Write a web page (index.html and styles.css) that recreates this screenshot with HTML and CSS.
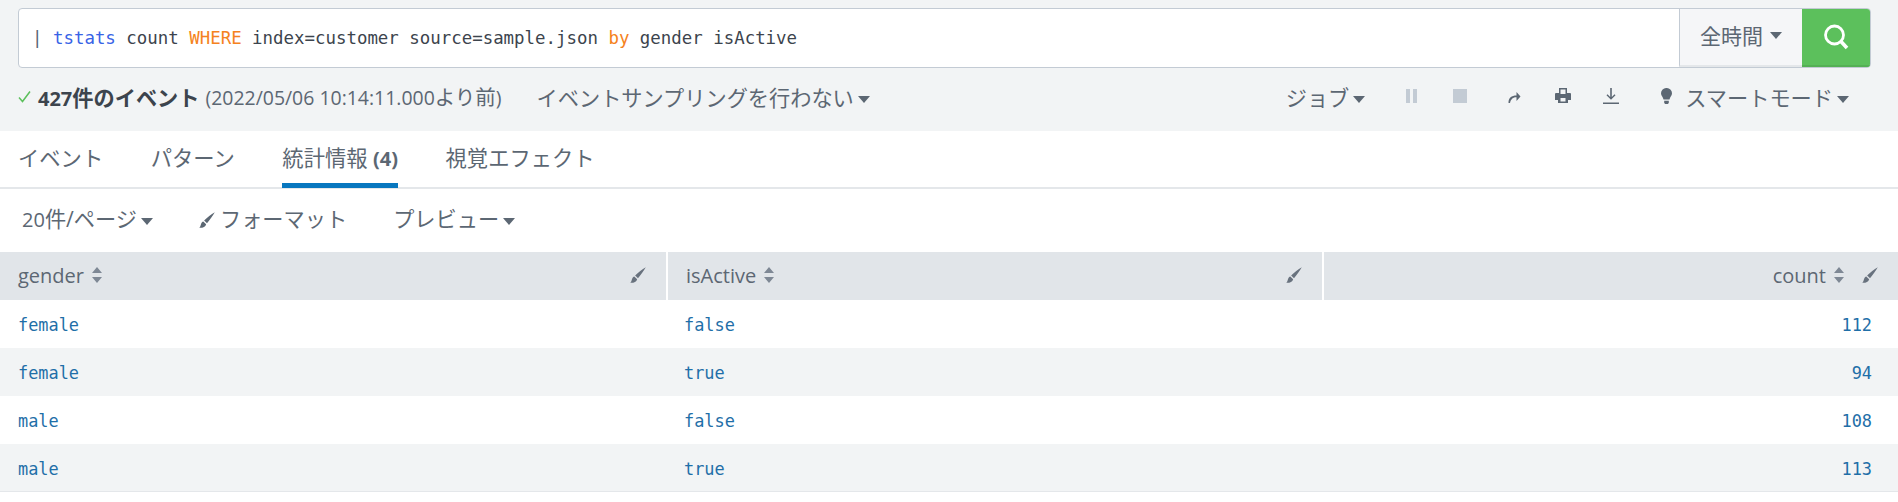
FILE: index.html
```html
<!DOCTYPE html>
<html lang="ja">
<head>
<meta charset="utf-8">
<title>Search</title>
<link rel="stylesheet" href="styles.css">
</head>
<body>
<header class="top">
  <div class="search">
    <div class="query"><span class="q-line"><span class="q-pipe">|</span> <span class="q-cmd">tstats</span> count <span class="q-kw">WHERE</span> index=customer source=sample.json <span class="q-kw">by</span> gender isActive</span></div>
    <div class="time">全時間<i class="caret"></i></div>
    <div class="go">
      <svg width="28" height="28" viewBox="0 0 28 28"><circle cx="12.5" cy="12" r="9" fill="none" stroke="#fff" stroke-width="2.8"/><path d="M19 18.500l6 6.500" stroke="#fff" stroke-width="3.600" fill="none"/></svg>
    </div>
  </div>
  <div class="status">
    <div class="status-left">
      <svg class="check" width="13" height="13" viewBox="0 0 13 13"><path d="M1 7.500l3.500 4L12 1.500" fill="none" stroke="#5cc05c" stroke-width="1.500"/></svg>
      <b class="count"><span class="lat">427</span>件のイベント</b>
      <span class="range">(2022/05/06 10:14:11.000<span class="jp">より前</span>)</span>
      <span class="sampling">イベントサンプリングを行わない<i class="caret"></i></span>
    </div>
    <div class="status-right">
      <span class="job">ジョブ<i class="caret"></i></span>
      <span class="actions">
        <svg width="11" height="16" viewBox="0 0 11 16"><path d="M0 1h4v14H0zM7 1h4v14H7z" fill="#c3cbd4"/></svg>
        <svg width="14" height="16" viewBox="0 0 14 16"><path d="M0 1h14v14H0z" fill="#c3cbd4"/></svg>
        <svg class="act-share" width="14" height="16" viewBox="0 0 14 16"><path d="M1.500 15c0-5.500 3-7.500 8-7.500V4l4 4.500-4 4.500V9.300c-3.500 0-5.500 1.700-6.500 5.700z" fill="#5c6773"/></svg>
        <svg class="act-print" width="16" height="16" viewBox="0 0 16 16"><path d="M4 0h8v5h3a1 1 0 0 1 1 1v6h-3v3H3v-3H0V6a1 1 0 0 1 1-1h3zM5.500 10v3.500h5V10zM5.500 1.500V6h5V1.500z" fill="#5c6773" fill-rule="evenodd"/></svg>
        <svg class="act-down" width="16" height="17" viewBox="0 0 16 17"><path d="M7.200 0h1.600v9l2.700-2.700 1 1L8 11.800 3.500 7.300l1-1L7.200 9zM0 14.500h16V16H0z" fill="#5c6773"/></svg>
      </span>
      <span class="mode">
        <svg class="bulb" width="11" height="16" viewBox="0 0 11 16"><path d="M5.500 0A5.300 5.300 0 0 1 11 5.300c0 2.500-2 3.700-2.500 6.200h-6C2 9 0 7.800 0 5.300A5.300 5.300 0 0 1 5.500 0zM3.200 12.800h4.600V15l-1 1H4.200l-1-1z" fill="#5c6773"/></svg><span>スマートモード<i class="caret"></i></span>
      </span>
    </div>
  </div>
</header>
<nav class="tabs">
  <span class="tab">イベント</span>
  <span class="tab">パターン</span>
  <span class="tab active">統計情報 <b class="tab-count">(4)</b></span>
  <span class="tab">視覚エフェクト</span>
</nav>
<div class="toolbar">
  <span class="tool"><span class="lat">20</span>件/ページ<i class="caret"></i></span>
  <span class="tool"><svg class="brush" width="16" height="16" viewBox="0 0 15 15"><path d="M14.800.2c-2 3.500-4.500 7-7.300 10.300L4.800 8C7.800 5 11.300 2.300 14.800.2zM4 8.800l2.700 2.600C6 14 3.500 15 .2 14.800c1.300-1 1.200-2.300 1.800-3.800.4-1.200 1.100-1.900 2-2.200z" fill="#5c6773"/></svg>フォーマット</span>
  <span class="tool">プレビュー<i class="caret"></i></span>
</div>
<table class="results">
  <colgroup><col class="c1"><col class="c2"><col></colgroup>
  <thead>
    <tr>
      <th><div class="th"><span>gender</span><svg class="sort" width="10" height="16" viewBox="0 0 10 16"><path d="M5 0l5 6H0zM5 16l5-6H0z" fill="#7e8895"/></svg><svg class="pen" width="16" height="16" viewBox="0 0 15 15"><path d="M14.800.2c-2 3.500-4.500 7-7.300 10.300L4.800 8C7.800 5 11.300 2.300 14.800.2zM4 8.800l2.700 2.600C6 14 3.500 15 .2 14.800c1.300-1 1.200-2.300 1.800-3.800.4-1.200 1.100-1.900 2-2.200z" fill="#68727e"/></svg></div></th>
      <th><div class="th"><span>isActive</span><svg class="sort" width="10" height="16" viewBox="0 0 10 16"><path d="M5 0l5 6H0zM5 16l5-6H0z" fill="#7e8895"/></svg><svg class="pen" width="16" height="16" viewBox="0 0 15 15"><path d="M14.800.2c-2 3.500-4.500 7-7.300 10.300L4.800 8C7.800 5 11.300 2.300 14.800.2zM4 8.800l2.700 2.600C6 14 3.500 15 .2 14.800c1.300-1 1.200-2.300 1.800-3.800.4-1.200 1.100-1.900 2-2.200z" fill="#68727e"/></svg></div></th>
      <th><div class="th th-num"><span>count</span><svg class="sort" width="10" height="16" viewBox="0 0 10 16"><path d="M5 0l5 6H0zM5 16l5-6H0z" fill="#7e8895"/></svg><svg class="pen-num" width="16" height="16" viewBox="0 0 15 15"><path d="M14.800.2c-2 3.500-4.500 7-7.300 10.300L4.800 8C7.800 5 11.300 2.300 14.800.2zM4 8.800l2.700 2.600C6 14 3.500 15 .2 14.800c1.300-1 1.200-2.300 1.800-3.800.4-1.200 1.100-1.900 2-2.200z" fill="#68727e"/></svg></div></th>
    </tr>
  </thead>
  <tbody>
    <tr><td>female</td><td>false</td><td class="num">112</td></tr>
    <tr><td>female</td><td>true</td><td class="num">94</td></tr>
    <tr><td>male</td><td>false</td><td class="num">108</td></tr>
    <tr><td>male</td><td>true</td><td class="num">113</td></tr>
  </tbody>
</table>
</body>
</html>
```
FILE: styles.css
```css
* { box-sizing: border-box; }
html, body { margin: 0; padding: 0; background: #fff; }
body {
  font-family: "Open Sans", "Noto Sans CJK JP", sans-serif;
  font-size: 21.200px;
  color: #5c6773;
  width: 1898px;
  height: 502px;
  overflow: hidden;
}
.lat { font-size: 20px; }
.jp { font-size: 20.500px; }
.caret {
  display: inline-block;
  width: 0;
  height: 0;
  border-left: 6px solid transparent;
  border-right: 6px solid transparent;
  border-top: 7px solid #5c6773;
  margin-left: 4px;
  vertical-align: middle;
}
.top {
  background: #f2f4f5;
  height: 131px;
  padding: 8px 27px 0 18px;
}
.search {
  display: flex;
  height: 60px;
  background: #fff;
  border: 1px solid #c3cbd4;
  border-radius: 4px;
  overflow: hidden;
}
.query {
  flex: 1;
  display: flex;
  align-items: center;
  padding-left: 13px;
  padding-bottom: 1px;
}
.q-line {
  white-space: pre;
  font-family: "DejaVu Sans Mono", monospace;
  font-size: 17.420px;
  color: #3c444d;
}
.q-pipe { color: #5c6773; }
.q-cmd { color: #3863e6; }
.q-kw { color: #f58220; }
.time {
  width: 123px;
  display: flex;
  align-items: center;
  justify-content: center;
  padding-bottom: 4px;
  font-size: 21px;
  background: #f5f6f8;
  border-left: 1px solid #c3cbd4;
  border-bottom: 2px solid #e4e7ea;
}
.time .caret { margin-left: 7px; }
.go {
  width: 68px;
  display: flex;
  align-items: center;
  justify-content: center;
  background: #5cc05c;
  border-bottom: 2px solid #54b054;
}
.status {
  display: flex;
  justify-content: space-between;
  align-items: center;
  height: 58px;
  padding-right: 22px;
  padding-bottom: 2px;
}
.status-left, .status-right { display: flex; align-items: center; }
.check { margin-right: 7px; }
.count { color: #3c444d; font-weight: 700; }
.range { margin-left: 6px; font-size: 19.450px; }
.sampling { margin-left: 35px; }
.job { margin-right: 41px; }
.actions { display: flex; align-items: center; gap: 36px; margin-right: 42px; }
.act-share { margin-left: 4px; }
.act-print { margin-left: -2px; }
.act-down { margin-left: -4px; }
.mode { display: flex; align-items: center; gap: 13px; }
.tabs {
  display: flex;
  height: 58px;
  padding-left: 18px;
  gap: 47.500px;
  border-bottom: 2px solid #e4e7ea;
}
.tab { line-height: 54px; height: 57px; font-size: 21.300px; }
.tab.active { border-bottom: 5px solid #0877bf; }
.tab-count { font-size: 20px; }
.toolbar {
  display: flex;
  align-items: center;
  height: 63px;
  padding-left: 22px;
  padding-bottom: 6px;
  gap: 46px;
}
.brush { margin-right: 5px; vertical-align: -1px; }
.results {
  width: 100%;
  border-collapse: separate;
  border-spacing: 0;
  table-layout: fixed;
}
.c1 { width: 666px; }
.c2 { width: 656px; }
th {
  height: 48px;
  padding: 0 0 2px;
  background: #e1e5e9;
  font-size: 20px;
  font-weight: 400;
  text-align: left;
  border-left: 2px solid #fff;
}
th:first-child { border-left: 0; }
.th {
  display: flex;
  align-items: center;
  gap: 8px;
  padding: 0 20px 0 18px;
}
.th .pen { margin-left: auto; }
.th-num { justify-content: flex-end; }
.pen-num { margin-left: 10px; }
td {
  height: 48px;
  padding: 2px 18px 0;
  font-family: "DejaVu Sans Mono", monospace;
  font-size: 16.900px;
  color: #1f6fa8;
}
tbody tr:nth-child(even) td { background: #f2f4f5; }
tbody tr:last-child td { border-bottom: 1px solid #e4e7ea; }
td.num { text-align: right; padding-right: 26px; }
```
